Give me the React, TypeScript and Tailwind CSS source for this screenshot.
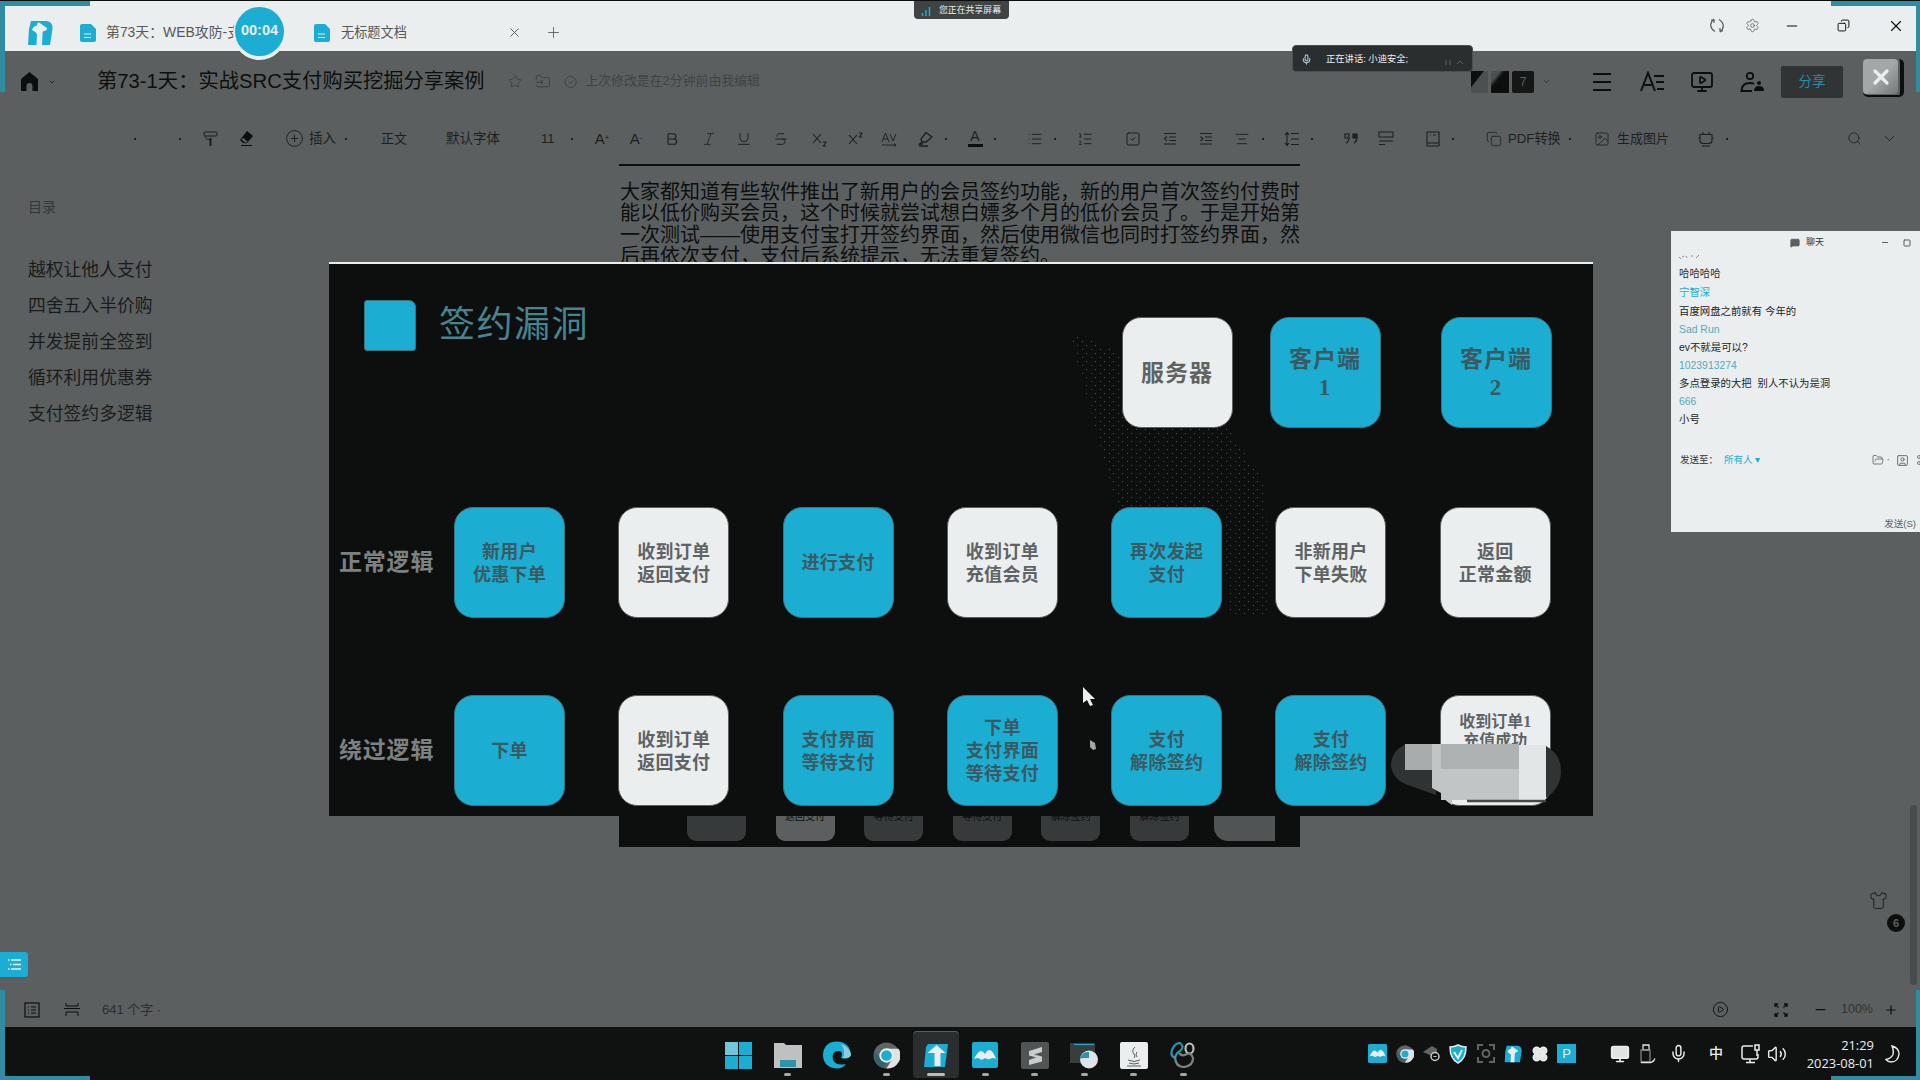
import React from "react";
import {
  Star, FolderInput, CircleCheck, ChevronDown, MonitorPlay, X, Plus, Minus,
  CirclePlus, Bold, Italic, Underline, Strikethrough, Highlighter, List, ListOrdered,
  SquareCheck, AlignCenter, Copy, Image, Search, Settings, Shirt, CirclePlay, Mic, Monitor,
  Volume2, Flower, MessageSquareMore, Scissors, FolderOpen, SquareUser, MonitorSmartphone, Square,
} from "lucide-react";

const sans = "font-['Liberation_Sans','Noto_Sans_CJK_SC',sans-serif]";
const serif = "font-['Liberation_Serif','Noto_Sans_CJK_SC',serif]";

const Dot = ({ ml }: { ml: string }) => (
  <div className={`flex w-1 shrink-0 justify-center ${ml}`}>
    <span className="size-[2px] bg-[#1d1f1f]" />
  </div>
);

const Tool = ({ ml, children }: { ml: string; children: React.ReactNode }) => (
  <div className={`flex w-5 shrink-0 justify-center ${ml}`}>{children}</div>
);

const Word = ({ c, children }: { c: string; children: React.ReactNode }) => (
  <div className={`shrink-0 whitespace-nowrap leading-none ${c}`}>{children}</div>
);

const Line = ({ d, w = 16, h = 16, s = 1.1, c = "" }: { d: string; w?: number; h?: number; s?: number; c?: string }) => (
  <svg className={c} width={w} height={h} viewBox={`0 0 ${w} ${h}`} fill="none" stroke="currentColor" strokeWidth={s}>
    <path d={d} />
  </svg>
);

const ic = { size: 16, strokeWidth: 1.2 };

function DocIcon() {
  return (
    <svg width="16" height="18" viewBox="0 0 16 18">
      <path d="M2 0h9l5 5v11a2 2 0 0 1-2 2H2a2 2 0 0 1-2-2V2a2 2 0 0 1 2-2z" fill="#1badd2" />
      <path d="M4 10h7M4 13.500h7" stroke="#eaeeef" strokeWidth="1.2" />
    </svg>
  );
}

function TLogo({ size = 26 }: { size?: number }) {
  return (
    <svg width={size} height={size} viewBox="0 0 26 24">
      <path d="M4 0h16q6 1 5.500 8L23 24H1L2 8z" fill="#1badd2" />
      <path d="M5 9q1-4 5-4.500Q10 1 12 1.500l8 5.500q0 3-3 3-1.500 0-1.500 3L15 24H9.500l.5-11q-1-2-5-4z" fill="#eaeeef" />
    </svg>
  );
}

function TabBar() {
  return (
    <div className="flex h-[51px] shrink-0 items-center border-t border-[#0d0f0e] bg-[#eaeeef] pt-[13px] text-[#55595a]">
      <div className="ml-[27px] w-[26px] shrink-0"><TLogo /></div>
      <div className="ml-[27px] shrink-0"><DocIcon /></div>
      <Word c="ml-[10px] w-[134px] text-[13.900px]">第73天：WEB攻防-支</Word>
      <div className="ml-[74px] shrink-0"><DocIcon /></div>
      <Word c="ml-[11px] w-[67px] text-[13.200px]">无标题文档</Word>
      <X className="ml-[99px] shrink-0" size={15} strokeWidth={1.5} />
      <Plus className="ml-[23px] shrink-0" size={17} strokeWidth={1.2} />
      <div className="mt-[-14px] ml-auto flex items-center pr-[15px]">
        <Line w={14} h={15} s={1.2} d="M4 1Q0 4 1 9q1 3 4 4.500M1 2h3v3M10 14q4-3 3-8-1-3-4-4.500M13 13h-3v-3" />
        <Settings className="ml-[21px]" size={15} strokeWidth={1.2} />
        <Minus className="ml-[24px] text-[#0d0f0e]" size={16} strokeWidth={1.8} />
        <Copy className="ml-[37px] -scale-x-100 text-[#0d0f0e]" size={13} strokeWidth={1.8} />
        <X className="ml-[37px] text-[#0d0f0e]" size={18} strokeWidth={1.5} />
      </div>
    </div>
  );
}

function Header() {
  return (
    <div className="flex h-[60px] shrink-0 items-center pt-px text-[#0d0f0e]">
      <svg className="ml-[20px] shrink-0" width="19" height="20" viewBox="0 0 19 20">
        <path d="M9.500 0 18 7v12h-5.500v-5a3 3 0 0 0-6 0v5H1V7z" fill="#0d0f0e" />
      </svg>
      <ChevronDown className="ml-[9px] shrink-0" size={8} strokeWidth={2} />
      <Word c="ml-[41px] w-[388px] text-[20.300px]">第73-1天：实战SRC支付购买挖掘分享案例</Word>
      <div className="flex w-[275px] shrink-0 items-center text-[#303333]">
        <Star className="ml-[23px]" size={17} strokeWidth={1} />
        <FolderInput className="ml-[13px]" size={19} strokeWidth={1} />
        <CircleCheck className="ml-[13px]" size={16} strokeWidth={1} />
        <Word c="ml-[8px] text-[12.900px] opacity-60">上次修改是在2分钟前由我编辑</Word>
      </div>
      <div className="ml-auto flex shrink-0 items-center">
        <div className="flex gap-[3px]">
          <div className="h-[22px] w-[17px] bg-linear-to-br from-[#0d0f0e] from-35% to-[#4c5050] to-40%" />
          <div className="h-[22px] w-[18px] bg-linear-to-br from-[#4c5050] from-25% to-[#0d0f0e] to-40%" />
          <div className="flex h-[22px] w-[22px] items-center justify-center rounded-[2px] bg-[#151717] text-[12px] text-[#5b5f60]">7</div>
        </div>
        <ChevronDown className="ml-[8px]" size={9} strokeWidth={1.5} />
        <div className="ml-[42px] flex h-[18px] w-[18px] flex-col justify-between">
          <div className="h-[2px] bg-[#0d0f0e]" /><div className="h-[2px] bg-[#0d0f0e]" /><div className="h-[2px] bg-[#0d0f0e]" />
        </div>
        <svg className="ml-[29px]" width="25" height="22" viewBox="0 0 25 22" fill="none" stroke="#0d0f0e" strokeWidth="2">
          <path d="M1 20 8 2l7 18M4 14h8M14 5h10M16 11h8M17 18h7" />
        </svg>
        <MonitorPlay className="ml-[25px]" size={24} strokeWidth={1.8} />
        <svg className="ml-[26px]" width="24" height="22" viewBox="0 0 24 22">
          <circle cx="10" cy="5" r="3.200" fill="none" stroke="#0d0f0e" strokeWidth="1.800" />
          <path d="M12 20H1.500q0-8 8.500-8 3 0 4 1" fill="none" stroke="#0d0f0e" strokeWidth="2" />
          <circle cx="19" cy="12" r="2" fill="#0d0f0e" />
          <path d="M14 20q0-5 5-5t5 5z" fill="#0d0f0e" />
        </svg>
        <div className="ml-[17px] flex h-[33px] w-[62px] items-center justify-center rounded-[2px] border-t border-[#34717f] bg-[#313434] text-[13.500px] text-[#2290ab]">分享</div>
        <div className="-mt-[5px] mr-[15px] ml-[20px] flex h-[40px] w-[42px] items-start">
          <div className="flex h-[38px] w-[41px] items-start rounded-[5px] border-r-4 border-b-2 border-[#0d0f0e]">
            <div className="flex h-[35px] w-[35px] items-center justify-center rounded-[4px] bg-linear-to-br from-[#a3a7a8] from-50% to-[#74787a] text-[#eaeeef]">
              <X size={24} strokeWidth={3.2} />
            </div>
          </div>
        </div>
      </div>
    </div>
  );
}

function Toolbar() {
  return (
    <div className="flex h-[54px] shrink-0 items-center pt-px text-[#1d1f1f]">
      <Dot ml="ml-[133px]" />
      <Dot ml="ml-[41px]" />
      <Tool ml="ml-[18px]">
        <svg width="15" height="16" viewBox="0 0 15 16" fill="none" stroke="currentColor"><rect x="1" y="1" width="13" height="4" rx="1" /><path d="M2 5.500q0 3 5.500 3" /><path d="M7.500 7v8" strokeWidth="2" /></svg>
      </Tool>
      <Tool ml="ml-[16px]">
        <svg width="15" height="15" viewBox="0 0 15 15"><path d="M8 0l6 5-6 7H4L1 9z" fill="#0d0f0e" /><path d="M4 6.500l5 4-2 2-5-4z" fill="#5b5f60" stroke="#0d0f0e" strokeWidth=".7" /><path d="M2 14.500h11" stroke="#0d0f0e" /></svg>
      </Tool>
      <Tool ml="ml-[28px]"><CirclePlus size={19} strokeWidth={1.2} /></Tool>
      <Word c="ml-[5px] w-[28px] text-[13.500px]">插入</Word>
      <Dot ml="ml-[7px]" />
      <Word c="ml-[33px] w-[28px] text-[13px]">正文</Word>
      <Word c="ml-[37px] w-[56px] text-[13.500px]">默认字体</Word>
      <Word c="ml-[39px] w-[14px] text-[13px]">11</Word>
      <Dot ml="ml-[15px]" />
      <Tool ml="ml-[18px]"><span className="text-[15px] leading-none">A<sup className="text-[8px]">+</sup></span></Tool>
      <Tool ml="ml-[14px]"><span className="text-[15px] leading-none">A<sup className="text-[8px]">-</sup></span></Tool>
      <Tool ml="ml-[16px]"><Bold {...ic} strokeWidth={1.6} /></Tool>
      <Tool ml="ml-[17px]"><Italic {...ic} /></Tool>
      <Tool ml="ml-[15px]"><Underline {...ic} strokeWidth={1.5} /></Tool>
      <Tool ml="ml-[17px]"><Strikethrough {...ic} strokeWidth={1.4} /></Tool>
      <Tool ml="ml-[18px]"><Line d="M2 3l8 9M10 3l-8 9M12 11h3l-2.500 4H15" /></Tool>
      <Tool ml="ml-[16px]"><Line d="M2 4l8 9M10 4l-8 9M12 2h3l-2.500 4H15" /></Tool>
      <Tool ml="ml-[14px]"><Line s={0.9} d="M1 11 4.500 2 8 11M2 8h5M9 3l3 7 3-7M1 14h14M13 12.500l2 1.500-2 1.500" /></Tool>
      <Tool ml="ml-[17px]"><Line d="M8 1.500 14 6 8 11H4L3 8zM4 11l-2.500 2H5M1 15h9" s={1.3} /></Tool>
      <Dot ml="ml-[8px]" />
      <Tool ml="ml-[17px]">
        <div className="flex w-[15px] flex-col items-center border-b-[3px] border-[#0d0f0e] pb-px text-[14px] leading-[13px]">A</div>
      </Tool>
      <Dot ml="ml-[8px]" />
      <Tool ml="ml-[28px]"><List {...ic} strokeWidth={1.4} /></Tool>
      <Dot ml="ml-[8px]" />
      <Tool ml="ml-[18px]"><ListOrdered {...ic} strokeWidth={1.4} /></Tool>
      <Tool ml="ml-[28px]"><SquareCheck {...ic} strokeWidth={1.5} /></Tool>
      <Tool ml="ml-[17px]"><Line d="M2 2.500h12M7 6h7M7 9.500h7M2 13h12M5 5.500 2.500 7.800 5 10" /></Tool>
      <Tool ml="ml-[16px]"><Line d="M2 2.500h12M7 6h7M7 9.500h7M2 13h12M2.500 5.500 5 7.800 2.500 10" /></Tool>
      <Tool ml="ml-[16px]"><AlignCenter {...ic} strokeWidth={1.4} /></Tool>
      <Dot ml="ml-[9px]" />
      <Tool ml="ml-[17px]"><Line d="M7 2.500h8M7 8h8M7 13.500h8M3 2v12M1 4l2-2.500L5 4M1 12l2 2.500L5 12" /></Tool>
      <Dot ml="ml-[8px]" />
      <Tool ml="ml-[27px]">
        <svg width="16" height="14" viewBox="0 0 16 14" fill="none" stroke="currentColor" strokeWidth="1.2"><path d="M2 2h4v4H2zM6 5q0 5-3 6" /><path d="M10 2h4v4h-4zM14 5q0 5-3 6" fill="currentColor" /></svg>
      </Tool>
      <Tool ml="ml-[15px]"><Line d="M1 6V1h14v5zM1 10h14M1 13.500h6" h={15} /></Tool>
      <Tool ml="ml-[27px]"><Line d="M2 1h12v14H2zM2 12h12M5 4h1M8 4h3" /></Tool>
      <Dot ml="ml-[8px]" />
      <Tool ml="ml-[29px]"><Copy {...ic} /></Tool>
      <Word c="ml-[4px] w-[54px] text-[13.200px]">PDF转换</Word>
      <Dot ml="ml-[6px]" />
      <Tool ml="ml-[20px]"><Image {...ic} /></Tool>
      <Word c="ml-[5px] w-[52px] text-[13px]">生成图片</Word>
      <Tool ml="ml-[27px]"><Line d="M2 3.500h12v6q0 3-3 3H5q-3 0-3-3zM5 3V1M11 3V1M4 15h8M0.500 7H2M14 7h1.500" /></Tool>
      <Dot ml="ml-[9px]" />
      <Tool ml="ml-[115px]"><Search size={15} strokeWidth={1.3} /></Tool>
      <Tool ml="ml-[15px]"><ChevronDown size={17} strokeWidth={1.3} /></Tool>
    </div>
  );
}

const outline = ["越权让他人支付", "四舍五入半价购", "并发提前全签到", "循环利用优惠券", "支付签约多逻辑"];
const miniCards = [["", "下单"], ["收到订单", "返回支付"], ["支付界面", "等待支付"], ["支付界面", "等待支付"], ["支付", "解除签约"], ["支付", "解除签约"]];

function DocBody() {
  return (
    <div className="flex h-[822px] shrink-0 text-[#0d0f0e]">
      <div className="w-[619px] shrink-0 pt-[32px] pl-[28px]">
        <div className="text-[14px] leading-[20px] text-[#353838]">目录</div>
        <div className="mt-[35px] text-[17.800px]">
          {outline.map((t) => (
            <div key={t} className="h-9 leading-9 text-[#1a1c1c]">{t}</div>
          ))}
        </div>
      </div>
      <div className="w-[681px] shrink-0">
        <div className="-mt-px h-[2px] bg-[#0d0f0e]" />
        <div className="mt-[16px] h-[519px] pl-px text-[20px] leading-[21.400px] whitespace-nowrap">
          <div>大家都知道有些软件推出了新用户的会员签约功能，新的用户首次签约付费时</div>
          <div>能以低价购买会员，这个时候就尝试想白嫖多个月的低价会员了。于是开始第</div>
          <div>一次测试——使用支付宝打开签约界面，然后使用微信也同时打签约界面，然</div>
          <div>后再依次支付，支付后系统提示，无法重复签约。</div>
        </div>
        <div className="flex h-[146px] items-end gap-[29.600px] bg-[#0d0f0e] pb-[6px] pl-[68px]">
          {miniCards.map(([a, b], i) => (
            <div key={i} className={`flex h-[60px] w-[59px] shrink-0 flex-col items-center justify-center rounded-[9px] text-[10px] leading-[12.500px] ${i === 1 ? "bg-[#5b5f60]" : "bg-[#373a3a]"}`}>
              <span>{a}</span>
              <span>{b}</span>
            </div>
          ))}
          <div className="-ml-[5px] h-[60px] w-[61px] shrink-0 rounded-bl-[14px] bg-[#505455]" />
        </div>
      </div>
      <div className="flex grow flex-col items-end">
        <div className="mt-[640px] mr-[3px] flex">
          <div className="mr-[4px] flex w-[42px] flex-col items-center pt-[86px]">
            <Shirt size={19} strokeWidth={1} className="mr-[13px]" />
            <div className="mt-[4px] mr-[-22px] flex size-[18px] items-center justify-center rounded-full bg-[#0d0f0e] text-[11px] font-bold text-[#5b5f60]">6</div>
          </div>
          <div className="h-[180px] w-[7px] rounded bg-[#484c4c]" />
        </div>
      </div>
    </div>
  );
}

function StatusBar() {
  return (
    <div className="flex h-[40px] shrink-0 items-center pt-[5px] text-[#0d0f0e]">
      <svg className="ml-[24px]" width="16" height="16" viewBox="0 0 16 16" fill="none" stroke="#0d0f0e" strokeWidth="1.200"><rect x="1" y="1" width="14" height="14" /><path d="M4 5h1M7 5h5M4 8h1M7 8h5M4 11h1M7 11h5" /></svg>
      <svg className="ml-[24px]" width="16" height="13" viewBox="0 0 16 13" fill="none" stroke="#0d0f0e"><path d="M2 0v3h12V0M0 5.500h16M2 13V9h12v4" /></svg>
      <Word c="ml-[22px] text-[13px] text-[#2b2e2e]">641 个字 ·</Word>
      <div className="mr-[22px] ml-auto flex items-center">
        <CirclePlay size={17} strokeWidth={1.3} />
        <Line c="ml-[44px]" s={1.3} d="M2 5V2h3M2 2l3.500 3.500M14 5V2h-3M14 2l-3.500 3.500M2 11v3h3M2 14l3.500-3.500M14 11v3h-3M14 14l-3.500-3.500" />
        <Minus className="ml-[24px]" size={15} strokeWidth={2} />
        <Word c="ml-[13px] w-[33px] text-[12.500px] text-[#303333]">100%</Word>
        <Plus className="ml-[10px]" size={14} strokeWidth={2} />
      </div>
    </div>
  );
}

type Card = { c: "b" | "w"; t: string[] };
const rows: { label: string; cards: Card[] }[] = [
  {
    label: "正常逻辑",
    cards: [
      { c: "b", t: ["新用户", "优惠下单"] }, { c: "w", t: ["收到订单", "返回支付"] }, { c: "b", t: ["进行支付"] },
      { c: "w", t: ["收到订单", "充值会员"] }, { c: "b", t: ["再次发起", "支付"] }, { c: "w", t: ["非新用户", "下单失败"] },
      { c: "w", t: ["返回", "正常金额"] },
    ],
  },
  {
    label: "绕过逻辑",
    cards: [
      { c: "b", t: ["下单"] }, { c: "w", t: ["收到订单", "返回支付"] }, { c: "b", t: ["支付界面", "等待支付"] },
      { c: "b", t: ["下单", "支付界面", "等待支付"] }, { c: "b", t: ["支付", "解除签约"] }, { c: "b", t: ["支付", "解除签约"] },
      { c: "w", t: ["收到订单1", "充值成功"] },
    ],
  },
];

function SlideCard({ card, size, last = false }: { card: Card; size: string; last?: boolean }) {
  return (
    <div className={`flex h-[111px] w-[111px] shrink-0 flex-col items-center rounded-[19px] border pt-[2px] font-bold ${last ? "" : "justify-center"} ${size} ${card.c === "b" ? "border-[#3c7380] bg-[#1badd2] text-[#3a5a62]" : "border-[#5b5f60] bg-[#eaeeef] text-[#5f6364]"}`}>
      {card.t.map((t, i) => <div key={i} className={last && i === 0 ? "mt-[14px]" : ""}>{t}</div>)}
    </div>
  );
}

function Slide() {
  return (
    <div className={`absolute top-[262px] left-[329px] h-[554px] w-[1264px] border-t-2 border-[#eaeeef] bg-[#0d0f0e] ${serif}`}>
      <svg className="absolute top-0 left-0" width="1264" height="552">
        <defs>
          <pattern id="speck" width="9" height="8" patternUnits="userSpaceOnUse">
            <rect x="1" y="1" width="1" height="1" fill="#4c5050" />
            <rect x="6" y="5" width="1" height="1" fill="#4c5050" />
          </pattern>
        </defs>
        <path d="M740 68 786 86 900 166 936 219 942 353 900 353 893 246 788 242z" fill="url(#speck)" />
      </svg>
      <div className="relative flex h-[243px] items-start">
        <div className="mt-[36px] ml-[35px] h-[51px] w-[52px] rounded-[3px] rounded-tr-[7px] border border-[#3c7380] bg-[#1badd2]" />
        <div className="mt-[40px] ml-[23px] text-[36px] leading-[42px] tracking-[1.500px] text-[#488490]">签约漏洞</div>
        <div className="mt-[53px] ml-auto flex pr-[41.500px]">
          <SlideCard card={{ c: "w", t: ["服务器"] }} size="text-[23px] leading-[28px] tracking-[1px]" />
          <div className="w-[37px]" />
          <SlideCard card={{ c: "b", t: ["客户端", "1"] }} size="text-[23px] leading-[28px] tracking-[1px]" />
          <div className="w-[60px]" />
          <SlideCard card={{ c: "b", t: ["客户端", "2"] }} size="text-[23px] leading-[28px] tracking-[1px]" />
        </div>
      </div>
      {rows.map((r, i) => (
        <div key={r.label} className={`relative flex items-center ${i ? "mt-[77px]" : ""}`}>
          <div className="w-[125px] shrink-0 pt-[2px] pl-[10px] text-[23px] font-bold tracking-[.8px] whitespace-nowrap text-[#7d8182]">{r.label}</div>
          <div className="flex gap-[53.300px]">
            {r.cards.map((c, j) => (
              <SlideCard key={j} card={c} last={i === 1 && j === 6} size={i === 1 && j === 6 ? "text-[16px] leading-[19px]" : "text-[18px] leading-[23px] tracking-[.3px]"} />
            ))}
          </div>
        </div>
      ))}
      <svg className="absolute top-[473px] left-[1060px]" width="180" height="72" viewBox="0 0 180 72">
        <path d="M17 7Q2 14 2 29q2 14 17 19l28 10V7z" fill="#303333" />
        <path d="M157 9q15 8 15 25t-15 27z" fill="#303333" />
        <path d="M16 7h37v26H16z" fill="#a9acad" />
        <path d="M43 7h20v61q-8-5-11-12l-9-5z" fill="#c2c5c6" />
        <path d="M52 7h78v25H52z" fill="#afb2b3" />
        <path d="M52 32h78v31H52z" fill="#c2c5c6" />
        <path d="M130 8h27v54h-27z" fill="#e2e6e7" />
        <path d="M78 64h79" stroke="#454848" strokeWidth="2.500" />
      </svg>
      <svg className="absolute top-[423px] left-[753px]" width="22" height="70" viewBox="0 0 22 70">
        <path d="M1 0v16l4-3 3 6 3-1-3-6h5z" fill="#eaeeef" />
        <path d="M8 53l5 3 1 6-3 1-3-3z" fill="#a4a7a8" />
      </svg>
    </div>
  );
}

const chat: [string, string, string][] = [
  ["哈哈哈哈", "text-[#2f3232]", "h-[19px]"],
  ["宁智深", "text-[#1badd2]", "h-[19px]"],
  ["百度网盘之前就有 今年的", "text-[#1d1f1f]", "h-[19px]"],
  ["Sad Run", "text-[#56a9bd]", "h-[18px]"],
  ["ev不就是可以?", "text-[#1d1f1f]", "h-[18px]"],
  ["1023913274", "text-[#56a9bd]", "h-[18px]"],
  ["多点登录的大把  别人不认为是洞", "text-[#1d1f1f]", "h-[18px]"],
  ["666", "text-[#56a9bd]", "h-[18px]"],
  ["小号", "text-[#1d1f1f]", "h-[18px]"],
];

function ChatPanel() {
  return (
    <div className="absolute top-[231px] left-[1671px] flex h-[301px] w-[249px] flex-col overflow-hidden bg-[#eaeeef] text-[10.400px] text-[#5b5f60]">
      <div className="flex h-[23px] shrink-0 items-center">
        <MessageSquareMore className="ml-[119px] fill-[#5b5f60] text-[#5b5f60]" size={10} strokeWidth={2} />
        <span className="ml-[6px] text-[9px] text-[#303333]">聊天</span>
        <span className="ml-auto h-px w-[6px] bg-[#5b5f60]" />
        <Square className="mr-[9px] ml-[15px]" size={8} strokeWidth={3} />
      </div>
      <svg className="ml-2 shrink-0" width="24" height="10" viewBox="0 0 24 10" fill="none" stroke="#8a8d8e">
        <path d="M0 3l2 2M3 3l2-1M7 2l1 2M12 2h2M17 4l3-3" />
      </svg>
      {chat.map(([t, c, h]) => (
        <div key={t} className={`flex shrink-0 items-center pl-2 whitespace-pre ${c} ${h}`}>{t}</div>
      ))}
      <div className="mt-[23px] flex h-[16px] shrink-0 items-center">
        <span className="ml-[9px] text-[9.500px] text-[#2f3232]">发送至：</span>
        <span className="ml-[6px] text-[9.500px] whitespace-nowrap text-[#1badd2]">所有人 ▾</span>
        <FolderOpen className="ml-auto" size={12} strokeWidth={1.6} />
        <span className="mx-[3px]">·</span>
        <SquareUser className="ml-[3px]" size={13} strokeWidth={1.6} />
        <Scissors className="-mr-[8px] ml-[7px] shrink-0" size={12} strokeWidth={1.6} />
      </div>
      <div className="mt-auto mr-[4px] mb-[1px] text-right text-[9.500px]">发送(S)</div>
    </div>
  );
}

function TaskApp({ children, run = true, active = false }: { children: React.ReactNode; run?: boolean; active?: boolean }) {
  return (
    <div className={`flex h-[47px] w-[46px] shrink-0 flex-col items-center justify-end rounded-[4px] pb-[2px] ${active ? "border-t border-[#5b5f60] bg-[#2b2e2e]" : ""}`}>
      <div className="flex h-[28px] items-center">{children}</div>
      <div className="mt-[4px] flex h-[3px]">
        {active ? <div className="w-[18px] rounded bg-[#b9bcbd]" /> : run ? <div className="w-[7px] rounded bg-[#a4a7a8]" /> : null}
      </div>
    </div>
  );
}

function Wave({ s }: { s: number }) {
  return (
    <svg width={s} height={s} viewBox="0 0 26 26">
      <rect width="26" height="26" rx="2" fill="#1badd2" />
      <path d="M2 17q4-8 7-8 2 0 4 3 2-4 4-4 4 0 7 9-3-2-6 0-2 1-5-1-3 3-5 1t-6 0z" fill="#eaeeef" />
    </svg>
  );
}

function Chrome({ s }: { s: number }) {
  return (
    <svg width={s} height={s} viewBox="0 0 28 28">
      <circle cx="14" cy="14" r="13.500" fill="#606465" />
      <path d="M14 7h12.500A13.500 13.500 0 0 1 14 27.500l6-10z" fill="#dfe3e4" />
      <path d="M2 10l6 8 6 3-3 6Q1 24 1 12z" fill="#34616c" />
      <circle cx="14" cy="14" r="7.500" fill="#eaeeef" />
      <circle cx="14" cy="14" r="5.500" fill="#1badd2" />
    </svg>
  );
}

function Taskbar() {
  return (
    <div className="flex h-[53px] shrink-0 items-center bg-[#101211] text-[#eaeeef]">
      <div className="ml-[715.500px] flex shrink-0 gap-[3.400px] pt-[2px]">
        <TaskApp run={false}>
          <div className="grid grid-cols-2 gap-px">
            <div className="size-[13px] bg-[#71c6dc]" /><div className="size-[13px] bg-[#1badd2]" />
            <div className="size-[13px] bg-[#1badd2]" /><div className="size-[13px] bg-[#1badd2]" />
          </div>
        </TaskApp>
        <TaskApp>
          <svg width="28" height="25" viewBox="0 0 28 25"><path d="M0 0h10l2 2h16v23H0z" fill="#bdc1c2" /><path d="M6 17h16v7H6z" fill="#2c93ad" /></svg>
        </TaskApp>
        <TaskApp run={false}>
          <svg width="28" height="28" viewBox="0 0 28 28">
            <path d="M0 15Q0 1 14 .5 27 1 28 14q-2 5-10 3 3-6-2-7-8 0-6 9 3 6 13 4-4 5-10 4.500Q1 26 0 15z" fill="#1badd2" />
            <path d="M18 3q9 3 10 11-2 4-8 3 3-7-2-14z" fill="#8acbdc" />
          </svg>
        </TaskApp>
        <TaskApp><Chrome s={27} /></TaskApp>
        <TaskApp active>
          <svg width="24" height="23" viewBox="0 0 24 23"><path d="M4 0h20l-3 23H0l2-20z" fill="#1badd2" /><path d="M12.500 1l9 8h-5v13h-6V9h-7z" fill="#eaeeef" /></svg>
        </TaskApp>
        <TaskApp><Wave s={26} /></TaskApp>
        <TaskApp>
          <svg width="28" height="27" viewBox="0 0 28 27"><rect width="28" height="27" rx="2" fill="#505455" /><path d="M21 5v5l-8 2.500 8 2v5L8 23v-5l7-2.500-7-2V9z" fill="#c9cccd" /></svg>
        </TaskApp>
        <TaskApp>
          <svg width="28" height="27" viewBox="0 0 28 27"><path d="M0 1h25v20H0z" fill="#3a3d3d" /><path d="M4 2.500h20" stroke="#1badd2" /><circle cx="19" cy="17.500" r="9" fill="#dfe3e4" /><path d="M10 17q2-8 9-7v6h-4q-4 0-5 1" fill="#2c93ad" /></svg>
        </TaskApp>
        <TaskApp>
          <svg width="28" height="27" viewBox="0 0 28 27"><rect width="28" height="27" rx="2" fill="#eaeeef" /><path d="M15 5q-4 4-1 7 2 2 0 4M17 10q-2 3 0 5M8 18q6 3 12 0M9 21q5 2 10 0M7 24h14" fill="none" stroke="#5b5f60" /></svg>
        </TaskApp>
        <TaskApp>
          <svg width="26" height="26" viewBox="0 0 26 26" fill="none" strokeWidth="2.200"><path d="M5 16Q0 14 2 8q3-7 8-7 5 4 0 8-4 2-5 7" stroke="#2c93ad" /><ellipse cx="19.500" cy="6.500" rx="4" ry="5" stroke="#b9bcbd" /><path d="M5 14q0 11 9 11 9-1 9-9-2-6-6-4-5 3-8-1" stroke="#7d8182" /></svg>
        </TaskApp>
      </div>
      <div className="ml-[162px] flex shrink-0 items-center">
        <Wave s={19} />
        <div className="ml-[9px]"><Chrome s={18} /></div>
        <svg className="ml-[9px]" width="17" height="16" viewBox="0 0 17 16"><path d="M0 6 9 0l5 3v6l-5 1z" fill="#606465" /><circle cx="12" cy="10.500" r="4" fill="#101211" stroke="#c9cccd" strokeWidth="1.500" /><path d="M10.500 10.500h3" stroke="#c9cccd" /></svg>
        <svg className="ml-[9px]" width="18" height="20" viewBox="0 0 18 20"><path d="M9 1q4 2 8 2 0 12-8 16Q1 15 1 3q4 0 8-2z" fill="#1badd2" stroke="#eaeeef" strokeWidth="1.500" /><path d="M5 8l4 6 4-8" fill="none" stroke="#eaeeef" strokeWidth="2" /></svg>
        <svg className="ml-[10px]" width="18" height="19" viewBox="0 0 18 19" fill="none" stroke="#606465" strokeWidth="2"><path d="M1 6V1h5M12 1h5v5M17 13v5h-5M6 18H1v-5" /><circle cx="9" cy="9.500" r="3.500" /></svg>
        <div className="ml-[9px]"><TLogo size={18} /></div>
        <Flower className="ml-[9px] fill-[#dfe3e4]" size={18} />
        <div className="ml-[8px] flex size-[19px] items-center justify-center bg-[#1badd2] text-[13px]">P</div>
        <Monitor className="ml-[34px] fill-[#dfe3e4]" size={20} />
        <svg className="ml-[9px]" width="17" height="20" viewBox="0 0 17 20" fill="none" stroke="#dfe3e4" strokeWidth="1.300"><path d="M4 1h6v5H4z" /><path d="M2 6h9v12H2z" stroke="#7d8182" /><path d="M2 18.500h10q3-1 4-4" /></svg>
        <Mic className="ml-[13px]" size={19} strokeWidth={1.8} />
        <span className="ml-[19px] w-[18px] text-center text-[14px] font-medium">中</span>
        <svg className="ml-[16px]" width="20" height="20" viewBox="0 0 20 20" fill="none" stroke="#eaeeef" strokeWidth="1.500"><path d="M12 2H3q-2 0-2 2v9q0 2 2 2h12q2 0 2-2v-3M5 18.500h9M9 15v3" /><path d="M14 1h4v5h-4zM16 6v6" /></svg>
        <Volume2 className="ml-[6px]" size={20} strokeWidth={1.7} />
      </div>
      <div className="ml-auto w-[70px] pt-px text-right font-['Open_Sans','Noto_Sans',sans-serif] text-[12.900px] leading-[18px] whitespace-nowrap">
        <div>21:29</div>
        <div>2023-08-01</div>
      </div>
      <svg className="mr-[20px] ml-[11px]" width="15" height="18" viewBox="0 0 15 18" fill="none" stroke="#eaeeef" strokeWidth="1.400">
        <path d="M7 1q7 2 7 8-1 8-8 8-3 0-5-2.500 5-1 7-5 1-4-1-8.500z" />
      </svg>
    </div>
  );
}

function Brackets() {
  return (
    <div className="pointer-events-none absolute inset-0">
      <div className="absolute top-px left-0 h-[91px] w-[90px] border-t-[5px] border-l-[5px] border-[#328ca1]" />
      <div className="absolute top-px right-0 h-[91px] w-[89px] border-t-[5px] border-r-[4px] border-[#328ca1]" />
      <div className="absolute bottom-0 left-0 h-[90px] w-[90px] border-b-[4px] border-l-[5px] border-[#328ca1]" />
      <div className="absolute right-0 bottom-0 h-[90px] w-[89px] border-r-[4px] border-b-[4px] border-[#328ca1]" />
    </div>
  );
}

export default function App() {
  return (
    <div className={`relative flex h-[1080px] w-[1920px] flex-col overflow-hidden bg-[#5b5f60] ${sans}`}>
      <TabBar />
      <Header />
      <Toolbar />
      <DocBody />
      <StatusBar />
      <Taskbar />

      <div className="absolute top-[7px] left-[233px] flex size-[53px] items-center justify-center rounded-full bg-[#eaeeef]">
        <div className="mb-[4px] flex size-[49px] items-center justify-center rounded-full bg-[#1badd2] pb-[1px] text-[14.500px] font-bold text-[#eaeeef]">00:04</div>
      </div>
      <div className="absolute top-px left-[914px] flex h-[18px] w-[95px] items-center rounded-b-[4px] bg-[#404343] pt-px text-[8.900px] whitespace-nowrap text-[#eaeeef]">
        <svg className="ml-[7px]" width="10" height="10" viewBox="0 0 10 10"><path d="M1.500 10V7M5 10V4M8.500 10V1" stroke="#1badd2" strokeWidth="1.500" /></svg>
        <span className="ml-[8px]">您正在共享屏幕</span>
      </div>
      <div className="absolute top-[45px] left-[1292px] flex h-[27px] w-[181px] items-center rounded-[4px] border border-[#4c5050] bg-[#2b2e2e] pt-[2px] text-[9.300px] whitespace-nowrap text-[#eaeeef]">
        <Mic className="ml-[8px] text-[#a4c4cc]" size={11} strokeWidth={2.500} />
        <span className="ml-[14px]">正在讲话: 小迪安全;</span>
        <svg className="mt-[5px] mr-[7px] ml-auto" width="20" height="7" viewBox="0 0 20 7" fill="none" stroke="#5b5f60"><path d="M1 1v5M5 1v5M12 5l3-3 3 3" /></svg>
      </div>
      <div className="absolute top-[952px] left-0 flex h-[25px] w-[28px] items-center justify-center rounded-r-[3px] bg-[#1badd2] text-[#eaeeef]">
        <Line w={13} h={11} s={1.4} d="M3 1h10M5 5.500h8M3 10h10M0 1h1.500M2 5.500h1.500M0 10h1.500" />
      </div>
      <Slide />
      <ChatPanel />
      <Brackets />
    </div>
  );
}
